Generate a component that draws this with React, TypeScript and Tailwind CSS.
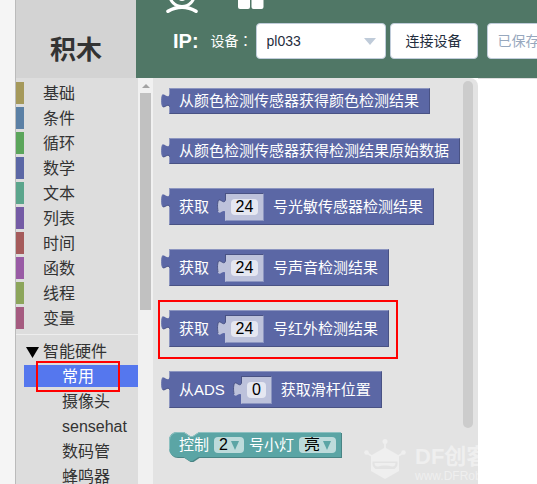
import type { ReactNode } from 'react';
import clsx from 'clsx';

interface Category {
  name: string;
  bar: string;
}

const categories: Category[] = [
  { name: '基础', bar: 'border-[#a5995b]' },
  { name: '条件', bar: 'border-[#5b80a5]' },
  { name: '循环', bar: 'border-[#5ba55b]' },
  { name: '数学', bar: 'border-[#5b67a5]' },
  { name: '文本', bar: 'border-[#5ba58c]' },
  { name: '列表', bar: 'border-[#745ba5]' },
  { name: '时间', bar: 'border-[#a55b5b]' },
  { name: '函数', bar: 'border-[#995ba5]' },
  { name: '线程', bar: 'border-[#8ca55b]' },
  { name: '变量', bar: 'border-[#a55b80]' },
];

const hardware = ['常用', '摄像头', 'sensehat', '数码管', '蜂鸣器'];

function Header() {
  return (
    <header className="flex h-[78px] shrink-0">
      <h1 className="flex w-[120px] shrink-0 items-end justify-center bg-[#d3d3d3] pb-3 text-[26px] leading-8 font-bold text-[#333]">
        积木
      </h1>
      <div className="min-w-0 flex-1 overflow-hidden bg-[#507766]">
        <div className="flex h-[23px] gap-10 pl-[30px]">
          {/* camera */}
          <svg width="32" height="14" viewBox="0 0 32 14" fill="none" stroke="#fff" strokeLinecap="round">
            <circle cx="16" cy="-6" r="12.5" strokeWidth="3" />
            <circle cx="16" cy="-4" r="5" fill="#fff" stroke="none" />
            <path d="M2 11.2C6 8.8 10 7.2 16 7.2s10 1.6 14 4" strokeWidth="3.6" />
          </svg>
          {/* apps */}
          <svg width="26" height="14" viewBox="0 0 26 14" fill="#fff">
            <rect x="0" y="-4" width="12" height="13" rx="2" />
            <rect x="13.5" y="-4" width="12" height="13" rx="2" />
          </svg>
        </div>
        <div className="flex items-center pl-[37px] text-sm">
          <span className="mr-3 text-xl font-bold text-white">IP:</span>
          <label
            htmlFor="device"
            className="mr-[3px] shrink-0 font-['Liberation_Sans','Noto_Sans_CJK_TC',sans-serif] text-white"
          >
            设备：
          </label>
          <div className="relative mr-1 shrink-0">
            <select
              id="device"
              className="h-9 w-[130px] appearance-none rounded border border-[#c0ccda] bg-white pl-[10px] text-[#1f2d3d]"
            >
              <option>pl033</option>
            </select>
            <svg className="pointer-events-none absolute top-[15px] right-[10px]" width="12" height="7" viewBox="0 0 12 7" fill="#bfcbd9">
              <path d="M0 0h12L6 7z" />
            </svg>
          </div>
          <button className="mr-[9px] h-9 w-[88px] shrink-0 rounded border border-[#c0ccda] bg-white text-[#1f2d3d]">
            连接设备
          </button>
          <input
            type="text"
            aria-label="已保存"
            placeholder="已保存"
            className="h-9 w-[180px] shrink-0 rounded border border-[#c0ccda] bg-white px-[10px] placeholder:text-[#97a8be]"
          />
        </div>
      </div>
    </header>
  );
}

function Toolbox() {
  return (
    <nav className="flex w-[137px] shrink-0 overflow-hidden bg-[#ddd]">
      <div className="min-w-0 flex-1 pt-1 text-base whitespace-nowrap text-[#333]">
        {categories.map((c) => (
          <div key={c.name} className={clsx('mb-[3px] flex h-[22px] items-center border-l-8 pt-0.5 pl-[19px]', c.bar)}>
            {c.name}
          </div>
        ))}
        <div className="mt-[5px] mb-[5px] border-b border-[#eee]" />
        <div className="mb-[3px] flex h-[22px] items-center gap-1 pt-0.5 pl-[10px]">
          <svg width="13" height="11" viewBox="0 0 13 11">
            <path d="M0 0h13L6.5 11z" />
          </svg>
          智能硬件
        </div>
        <div className="ml-2">
          {hardware.map((name, i) => (
            <div
              key={name}
              className={clsx(
                'relative mb-[3px] flex h-[22px] items-center pt-0.5 pl-[38px]',
                i === 0 && 'bg-[#5577ee] text-white'
              )}
            >
              {name}
              {i === 0 && <div className="absolute -top-1 -bottom-[5px] left-3 w-[84px] border-2 border-[#f00]" />}
            </div>
          ))}
        </div>
      </div>
      {/* scrollbar */}
      <div className="flex w-[15px] flex-col items-center gap-[5px] bg-[#f1f1f1] pt-[6px]">
        <svg width="8" height="4" viewBox="0 0 8 4" fill="#a3a3a3">
          <path d="M4 0l4 4H0z" />
        </svg>
        <div className="h-[217px] w-[11px] shrink-0 bg-[#c1c1c1]" />
      </div>
    </nav>
  );
}

/** Value block with the puzzle tab on its left side */
function ValueBlock({ children, marked }: { children: ReactNode; marked?: boolean }) {
  return (
    <div className="relative flex w-fit items-center border border-t-[#8c95c0] border-r-[#495284] border-b-[#495284] border-l-[#8c95c0] bg-[#5b67a5] pr-[10px] pl-[9px] whitespace-nowrap">
      <svg className="absolute -top-px -left-[9px]" width="11" height="22" viewBox="0 0 11 22" fill="none">
        <path d="M11 19H8.500C7 15 4 20 1.800 19 0 18 0 7.500 1.800 6.500 4 5.500 7 11 8.500 6.500H11z" fill="#5b67a5" />
        <path d="M8.500 18.500C7 15 4 20 1.800 18.500" stroke="#495284" />
        <path d="M1.800 18.500C.3 17 .3 8 1.800 6.500" stroke="#6a75ac" />
      </svg>
      {children}
      {marked && <div className="absolute -top-[11px] -right-[10px] -bottom-[13px] -left-3 border-2 border-[#f00]" />}
    </div>
  );
}

function NumberSlot({ value, label }: { value: string; label: string }) {
  return (
    <span className="relative mt-1 mr-[9px] mb-[3px] ml-4 flex h-7 items-center border border-t-[#495284] border-r-[#8c95c0] border-b-[#8c95c0] border-l-[#bdc2db] bg-[#bdc2db] px-[5px]">
      <svg className="absolute -top-px -left-[9px]" width="10" height="22" viewBox="0 0 10 22" fill="none">
        <path d="M10 19.500H8.500C7 15.500 4 20.500 1.800 19.500 0 18.500 0 8 1.800 7 4 6 7 11.500 8.500 7H10z" fill="#bdc2db" />
        <path d="M8.500 0v7C7 11.500 4 6 1.800 7 .3 8.500.3 14 1 18" stroke="#495284" />
      </svg>
      <input
        type="text"
        aria-label={label}
        defaultValue={value}
        className={clsx(
          'relative h-4 rounded bg-[#e5e7f1] text-center text-base leading-4 text-black',
          value.length > 1 ? 'w-[27px]' : 'w-[19px]'
        )}
      />
    </span>
  );
}

function FieldSelect({ value, label, wide }: { value: string; label: string; wide?: boolean }) {
  return (
    <span className="relative flex">
      <select
        aria-label={label}
        className={clsx(
          'h-4 appearance-none rounded bg-[#bddbdb] pl-[5px] text-base leading-4 text-black',
          wide ? 'w-[37px]' : 'w-[30px]'
        )}
      >
        <option>{value}</option>
      </select>
      <svg className="pointer-events-none absolute top-1 right-[5px]" width="8" height="9" viewBox="0 0 8 9" fill="#5ba5a5">
        <path d="M0 0h8L4 9z" />
      </svg>
    </span>
  );
}

/** Statement block: notch on top, bump below */
function LightBlock() {
  return (
    <div className="relative flex h-[26px] w-fit items-center gap-[5px] pr-[6px] pl-[10px] whitespace-nowrap">
      <svg className="absolute top-0 left-0" width="174" height="32" viewBox="0 0 174 32" fill="none">
        <path d="M1 9a8 8 0 0 1 8-8h7l6 4h3l6-4h142v25H30.500l-6 4h-3l-6-4H9a8 8 0 0 1-8-8z" fill="#498484" />
        <path d="M0 8a8 8 0 0 1 8-8h7l6 4h3l6-4h142v25H29.500l-6 4h-3l-6-4H8a8 8 0 0 1-8-8z" fill="#5ba5a5" />
        <path d="M.5 17.500V8A7.500 7.500 0 0 1 8 .5h7l6 4h3l6-4h142" stroke="#8cc0c0" />
      </svg>
      <span className="relative">控制</span>
      <FieldSelect value="2" label="灯号" />
      <span className="relative">号小灯</span>
      <FieldSelect value="亮" label="状态" wide />
    </div>
  );
}

function Watermark() {
  return (
    <div className="absolute top-[360px] left-[211px] flex gap-[9px] whitespace-nowrap text-[#efefef]">
      <svg width="42" height="42" viewBox="0 0 42 42" fill="currentColor">
        <g stroke="currentColor" strokeWidth="1.600">
          <path d="M21 4v9M3 15l8 5M39 15l-8 5" />
        </g>
        <circle cx="21" cy="3.500" r="2.500" />
        <circle cx="2.500" cy="14.500" r="2.300" />
        <circle cx="39.500" cy="14.500" r="2.300" />
        <path d="M21 9.500l14 8v15.500l-14 8-14-8V17.500z" />
        <path d="M8.500 23.500h25c.5 3-.5 6-3 7.500h-19c-2.500-1.500-3.500-4.500-3-7.500z" fill="#e3e3e3" />
        <path d="M10.500 25h21c0 2-1 3.500-3 3.500-4-1.500-11-1.500-15 0-2 0-3-1.500-3-3.500z" />
      </svg>
      <div className="pt-[7px]">
        <div className="text-[22px] leading-6 font-bold">DF创客</div>
        <div className="text-xs leading-[14px]">www.DFRob</div>
      </div>
    </div>
  );
}

function Flyout() {
  return (
    <section className="relative flex w-[325px] shrink-0 overflow-hidden rounded-tr-lg bg-[#e3e3e3]">
      <Watermark />
      <div className="relative flex flex-1 flex-col gap-6 pt-[10px] pl-4 text-[15px] leading-6 text-white">
        <ValueBlock>从颜色检测传感器获得颜色检测结果</ValueBlock>
        <ValueBlock>从颜色检测传感器获得检测结果原始数据</ValueBlock>
        <ValueBlock>
          获取
          <NumberSlot value="24" label="光敏传感器编号" />
          号光敏传感器检测结果
        </ValueBlock>
        <ValueBlock>
          获取
          <NumberSlot value="24" label="声音传感器编号" />
          号声音检测结果
        </ValueBlock>
        <ValueBlock marked>
          获取
          <NumberSlot value="24" label="红外传感器编号" />
          号红外检测结果
        </ValueBlock>
        <ValueBlock>
          从ADS
          <NumberSlot value="0" label="ADS通道" />
          获取滑杆位置
        </ValueBlock>
        <LightBlock />
      </div>
      <div className="absolute top-[3px] right-[5px] h-[347px] w-[10px] rounded-full bg-[#ccc]" />
    </section>
  );
}

export default function App() {
  return (
    <div className="flex h-screen overflow-hidden bg-[#f5f5f5] pl-[15px] font-['Liberation_Sans','Noto_Sans_CJK_SC',sans-serif]">
      <main className="flex min-w-0 flex-1 flex-col border-l border-[#bbb]">
        <Header />
        <div className="flex min-h-0 flex-1 bg-white">
          <Toolbox />
          <Flyout />
          <div className="flex-1 border-t border-[#ddd]" />
        </div>
      </main>
    </div>
  );
}
